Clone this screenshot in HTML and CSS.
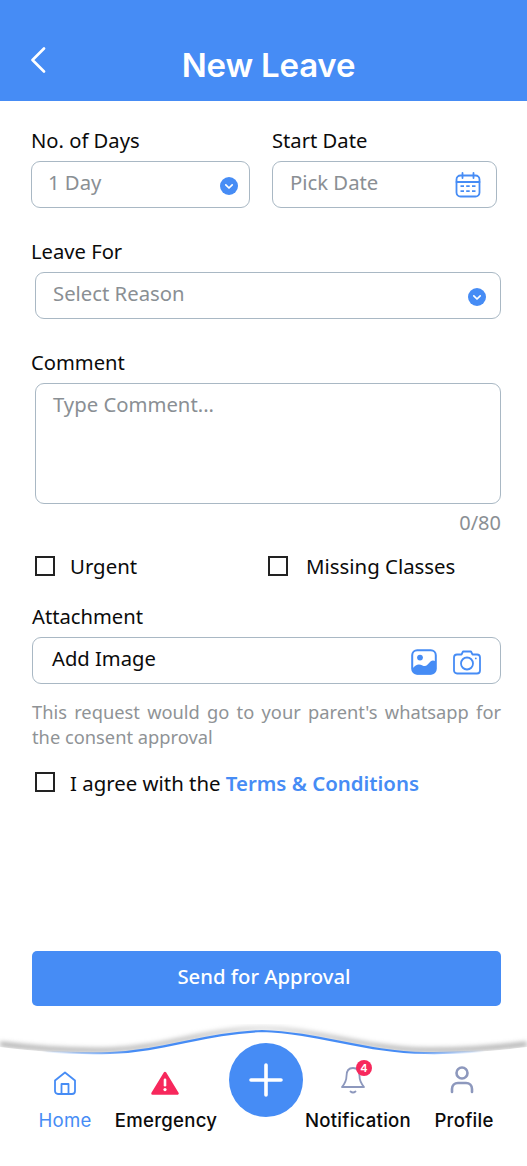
FILE: index.html
```html
<!DOCTYPE html>
<html lang="en">
<head>
<meta charset="utf-8">
<title>New Leave</title>
<link rel="stylesheet" href="styles.css">
</head>
<body>
<div class="page">
  <header class="topbar">
    <svg class="back" width="16" height="26" viewBox="0 0 16 26"><path d="M14 1.5 2.5 13 14 24.5" fill="none" stroke="#fff" stroke-width="2.6" stroke-linecap="round" stroke-linejoin="round"/></svg>
    <h1 class="title">New Leave</h1>
  </header>

  <main class="form">
    <div class="row-two">
      <div class="col-days">
        <div class="label">No. of Days</div>
        <div class="field field-days">
          <span class="ph">1 Day</span>
          <svg class="chev" width="18" height="18" viewBox="0 0 18 18"><circle cx="9" cy="9" r="9" fill="#468cf5"/><path d="M5.8 7.8 9 11l3.2-3.2" fill="none" stroke="#fff" stroke-width="1.7" stroke-linecap="round" stroke-linejoin="round"/></svg>
        </div>
      </div>
      <div class="col-date">
        <div class="label">Start Date</div>
        <div class="field field-date">
          <span class="ph">Pick Date</span>
          <svg class="cal" width="26" height="26" viewBox="0 0 26 26" fill="none" stroke="#468cf5" stroke-width="1.8"><rect x="1.500" y="3.500" width="23" height="21" rx="4"/><path d="M1.500 10h23M7.500 1v5M18.500 1v5" stroke-linecap="round"/><path d="M5.500 14.200h3.500M11.200 14.200h3.500M17 14.200h3.500M5.500 19.200h3.500M11.200 19.200h3.500M17 19.200h3.500" stroke-width="1.700"/></svg>
        </div>
      </div>
    </div>

    <div class="label label-for">Leave For</div>
    <div class="field field-indent">
      <span class="ph">Select Reason</span>
      <svg class="chev" width="18" height="18" viewBox="0 0 18 18"><circle cx="9" cy="9" r="9" fill="#468cf5"/><path d="M5.8 7.8 9 11l3.2-3.2" fill="none" stroke="#fff" stroke-width="1.7" stroke-linecap="round" stroke-linejoin="round"/></svg>
    </div>

    <div class="label label-comment">Comment</div>
    <div class="textarea"><span class="ph">Type Comment...</span></div>
    <div class="counter">0/80</div>

    <div class="checks">
      <label class="check check-urgent"><span class="box"></span><span class="check-text">Urgent</span></label>
      <label class="check check-missing"><span class="box"></span><span class="check-text">Missing Classes</span></label>
    </div>

    <div class="label label-attach">Attachment</div>
    <div class="field field-attach">
      <span class="add">Add Image</span>
      <span class="attach-icons">
        <svg width="26" height="26" viewBox="0 0 26 26"><rect x="1.200" y="1.200" width="23.600" height="23.600" rx="5" fill="#fff" stroke="#468cf5" stroke-width="2"/><circle cx="9" cy="8.600" r="2.900" fill="#468cf5"/><path d="M1.500 19.500C5 15 8 14.500 11.500 16.500 15 18.500 17 15 19.500 12.500 21 11 23 11 24.500 12.500V20a5 5 0 0 1-5 5.500h-13a5 5 0 0 1-5-5.500Z" fill="#468cf5"/></svg>
        <svg width="28" height="26" viewBox="0 0 28 26" fill="none" stroke="#468cf5" stroke-width="1.8"><path d="M4 5.500h4.500L10 2.500h8l1.500 3H24a3 3 0 0 1 3 3v13a3 3 0 0 1-3 3H4a3 3 0 0 1-3-3v-13a3 3 0 0 1 3-3Z" stroke-linejoin="round"/><circle cx="14" cy="14.500" r="6"/><circle cx="22.800" cy="9.400" r=".9" fill="#468cf5" stroke="none"/></svg>
      </span>
    </div>

    <p class="note">This request would go to your parent's whatsapp for the consent approval</p>

    <label class="check check-agree"><span class="box"></span><span>I agree with the <b class="link">Terms &amp; Conditions</b></span></label>

    <button class="send" type="button">Send for Approval</button>
  </main>

  <footer class="footer">
    <svg class="curve" width="527" height="50" viewBox="0 0 527 50">
      <defs>
        <filter id="soft" x="-5%" y="-80%" width="110%" height="260%"><feGaussianBlur stdDeviation="2.600"/></filter>
        <linearGradient id="fade" x1="0" x2="1" y1="0" y2="0">
          <stop offset="0.08" stop-color="#468cf5" stop-opacity="0"/>
          <stop offset="0.25" stop-color="#468cf5"/>
          <stop offset="0.77" stop-color="#468cf5"/>
          <stop offset="0.92" stop-color="#468cf5" stop-opacity="0"/>
        </linearGradient>
        <linearGradient id="shade" x1="0" x2="1" y1="0" y2="0">
          <stop offset="0" stop-color="#8f8f8f"/>
          <stop offset="0.35" stop-color="#a8a8a8"/>
          <stop offset="0.5" stop-color="#d8d8d8"/>
          <stop offset="0.65" stop-color="#a8a8a8"/>
          <stop offset="1" stop-color="#8f8f8f"/>
        </linearGradient>
      </defs>
      <path d="M0 20C40 25 75 27 110 26 165 24 205 6 262 4 320 6 365 25 425 26 460 26.500 495 24 527 20" fill="none" stroke="url(#shade)" stroke-width="3.500" filter="url(#soft)"/>
      <path d="M0 23C40 28 75 30 110 29 165 27 205 9 262 7 320 9 365 28 425 29 460 29.500 495 27 527 23V50H0Z" fill="#fff"/>
      <path d="M0 23C40 28 75 30 110 29 165 27 205 9 262 7 320 9 365 28 425 29 460 29.500 495 27 527 23" fill="none" stroke="url(#fade)" stroke-width="2.200"/>
    </svg>
    <nav class="nav">
      <a class="nav-item nav-active">
        <svg width="24" height="24" viewBox="0 0 24 24" fill="none" stroke="#468cf5" stroke-width="1.800" stroke-linejoin="round"><path d="M2 9.500 12 1.500l10 8V20a3 3 0 0 1-3 3H5a3 3 0 0 1-3-3Z"/><path d="M8.500 23V13h7v10"/></svg>
        <span>Home</span>
      </a>
      <a class="nav-item nav-alert">
        <svg width="28" height="24" viewBox="0 0 28 24"><path d="M14 2 26.500 22.500H1.500Z" fill="#f7285c" stroke="#f7285c" stroke-width="2.500" stroke-linejoin="round"/><rect x="12.700" y="7.500" width="2.600" height="8" rx="1.300" fill="#fff"/><circle cx="14" cy="18.600" r="1.600" fill="#fff"/></svg>
        <span>Emergency</span>
      </a>
      <div class="fab-cell">
        <button class="fab" type="button" aria-label="Add">
          <svg width="34" height="34" viewBox="0 0 34 34"><path d="M17 2v30M2 17h30" stroke="#fff" stroke-width="3.600" stroke-linecap="round"/></svg>
        </button>
      </div>
      <a class="nav-item nav-notify">
        <span class="bell">
          <svg width="24" height="28" viewBox="0 0 24 28" fill="none" stroke="#8d98bd" stroke-width="1.800" stroke-linecap="round" stroke-linejoin="round"><path d="M12 2C7 2 5.500 6 5.500 10c0 5-2 8-4.500 11h22c-2.500-3-4.500-6-4.500-11 0-4-1.500-8-6.500-8Z"/><path d="M9.500 25.500c1.500 1.200 3.500 1.200 5 0"/></svg>
          <span class="badge">4</span>
        </span>
        <span>Notification</span>
      </a>
      <a class="nav-item nav-profile">
        <svg width="24" height="28" viewBox="0 0 24 28" fill="none" stroke="#8d98bd" stroke-width="2.600" stroke-linecap="round"><circle cx="12" cy="7" r="5.500"/><path d="M2 26v-3c0-3.500 2.500-6 6-6h8c3.500 0 6 2.500 6 6v3"/></svg>
        <span>Profile</span>
      </a>
    </nav>
  </footer>
</div>
</body>
</html>
```
FILE: styles.css
```css
* { box-sizing: border-box; }
html, body { margin: 0; padding: 0; background: #fff; }
body { font-family: "Noto Sans", sans-serif; color: #0b0b0b; }
.page { width: 527px; height: 1166px; display: flex; flex-direction: column; overflow: hidden; }

.topbar { height: 101px; background: #468cf5; display: flex; align-items: flex-start; padding: 47px 0 0 30px; position: relative; flex: none; }
.back { display: block; }
.title { position: absolute; left: 0; right: 0; top: 42px; margin: 0; text-align: center; color: #fff; font: 600 33px/46px Inter, sans-serif; letter-spacing: -0.2px; padding-left: 10px; }

.form { flex: 1; display: flex; flex-direction: column; padding: 27px 26px 0 31px; min-height: 0; }
.label { font-size: 20.200px; line-height: 24px; height: 26px; }
.row-two { display: flex; gap: 22px; }
.col-days { width: 219px; }
.col-date { width: 225px; }
.field { height: 47px; margin-top: 7px; border: 1px solid #a9b8c4; border-radius: 9px; display: flex; align-items: center; justify-content: space-between; padding: 0 11px 0 17px; }
.field-days { padding-left: 16px; }
.field-date { padding: 0 15px 0 17px; }
.ph { font-size: 20.300px; line-height: 26px; color: #8a8f94; position: relative; top: -3px; }
.chev { display: block; flex: none; position: relative; top: 1px; }
.cal { display: block; flex: none; }

.label-for { margin-top: 31px; }
.field-indent { margin-left: 4px; padding: 0 14px 0 17px; }
.label-comment { margin-top: 31px; }
.textarea { margin: 7px 0 0 4px; height: 121px; border: 1px solid #a9b8c4; border-radius: 9px; padding: 7px 17px; }
.textarea .ph { top: 0; }
.counter { text-align: right; font-size: 20px; line-height: 24px; color: #8a8f94; margin-top: 7px; }

.checks { display: flex; margin-top: 18px; padding-left: 4px; }
.check { display: flex; align-items: center; gap: 15px; font-size: 20.400px; line-height: 28px; }
.check-urgent { width: 233px; }
.check-missing { gap: 18px; }
.check-text { position: relative; top: -1px; }
.box { width: 20px; height: 20px; border: 2px solid #222; flex: none; background: #fff; position: relative; top: -1px; }
.label-attach { margin-top: 23px; padding-left: 1px; }
.field-attach { margin: 7px 0 0 1px; padding: 0 19px 0 19px; }
.add { font-size: 20.200px; line-height: 26px; position: relative; top: -3px; }
.attach-icons { display: flex; gap: 16px; align-items: center; position: relative; top: 1px; }
.attach-icons svg { display: block; }
.note { margin: 16px 0 0 1px; font-size: 18.300px; line-height: 24.500px; color: #8f9396; text-align: justify; }
.check-agree { margin: 20px 0 0 4px; }
.link { color: #468cf5; font-weight: 600; }
.send { margin: 154px 0 0 1px; height: 55px; border: 0; border-radius: 5px; background: #468cf5; color: #fff; font: 500 20.300px/26px "Noto Sans", sans-serif; padding: 0 5px 5px 0; flex: none; }

.footer { height: 141px; position: relative; flex: none; }
.curve { position: absolute; left: 0; top: -1px; display: block; }
.nav { position: relative; display: grid; grid-template-columns: 90px 112px 87px 98px 114px; padding: 40px 6px 0 20px; }
.nav-item { display: flex; flex-direction: column; align-items: center; font: 450 18.600px/26px Inter, sans-serif; letter-spacing: 0.25px; color: #0b0b0b; white-space: nowrap; height: 68px; justify-content: flex-end; }
.nav-item svg { display: block; }
.nav-item > svg { margin-bottom: 12px; }
.nav-active { color: #468cf5; font-weight: 400; }
.nav-alert > svg { margin-right: 3px; }
.bell { position: relative; display: block; margin: 0 10px 13px 0; }
.badge { position: absolute; left: 15px; top: -6px; width: 16px; height: 16px; border-radius: 50%; background: #f7285c; color: #fff; font: 600 11px/16px Inter, sans-serif; text-align: center; letter-spacing: 0; }
.nav-profile > svg { margin: 0 4px 13px 0; }
.fab-cell { display: flex; justify-content: center; position: relative; }
.fab { width: 74px; height: 74px; border-radius: 50%; background: #468cf5; border: 0; padding: 0; display: flex; align-items: center; justify-content: center; position: absolute; top: -22px; }
.fab svg { display: block; }
```
